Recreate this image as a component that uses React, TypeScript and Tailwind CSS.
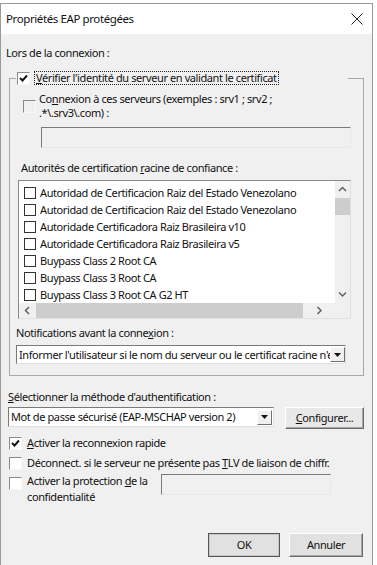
import React from 'react';

// small classic windows checkbox
function Check({ checked = false, flat = false, disabled = false }: { checked?: boolean; flat?: boolean; disabled?: boolean }) {
    const box = flat
        ? "w-[12px] h-[12px] border border-[#333] bg-white"
        : `w-[13px] h-[13px] border border-t-[#8a8a8a] border-l-[#8a8a8a] border-b-[#f8f8f8] border-r-[#f8f8f8] ${disabled ? 'bg-[#f0f0f0]' : 'bg-white'}`;
    return (
        <div className={`${box} shrink-0 flex items-center justify-center`}>
            {checked && (
                <svg width="9" height="9" viewBox="0 0 9 9">
                    <path d="M1 4 L3.5 6.5 L8 1.5" stroke="#111" strokeWidth="1.9" fill="none" />
                </svg>
            )}
        </div>
    );
}

function Chevron({ dir }: { dir: 'up' | 'down' | 'left' | 'right' }) {
    const d = {
        up: "M1 5 L4.5 1.5 L8 5",
        down: "M1 1.5 L4.5 5 L8 1.5",
        left: "M5 1 L1.5 4.5 L5 8",
        right: "M1.5 1 L5 4.5 L1.5 8",
    }[dir];
    const w = dir === 'up' || dir === 'down' ? 9 : 7;
    const h = dir === 'up' || dir === 'down' ? 7 : 9;
    return (
        <svg width={w} height={h} viewBox={`0 0 ${w} ${h}`}>
            <path d={d} stroke="#606060" strokeWidth="1.5" fill="none" />
        </svg>
    );
}

function DropArrow() {
    return (
        <div className="w-[15px] h-[15px] flex items-center justify-center bg-[#f0f0f0] border border-t-white border-l-white border-b-[#707070] border-r-[#707070]">
            <svg width="7" height="4" viewBox="0 0 7 4">
                <path d="M0 0 L7 0 L3.5 4 Z" fill="#111" />
            </svg>
        </div>
    );
}

export default function App() {
    const certs = [
        'Autoridad de Certificacion Raiz del Estado Venezolano',
        'Autoridad de Certificacion Raiz del Estado Venezolano',
        'Autoridade Certificadora Raiz Brasileira v10',
        'Autoridade Certificadora Raiz Brasileira v5',
        'Buypass Class 2 Root CA',
        'Buypass Class 3 Root CA',
        'Buypass Class 3 Root CA G2 HT',
    ];

    return (
        <div className="w-[377px] h-[565px] bg-white overflow-hidden font-['Noto_Sans',sans-serif] text-[11px] tracking-[-0.4px] text-[#111] leading-[14px]">
            <div className="mt-[3px] w-[373px] h-[565px] border border-[#9a9a9a] bg-[#f0f0f0] flex flex-col">
                {/* title bar */}
                <div className="h-[30px] bg-white flex items-center justify-between pl-[5px] pr-[9px]">
                    <span className="text-[11.5px]">Propriétés EAP protégées</span>
                    <svg width="12" height="12" viewBox="0 0 12 12">
                        <path d="M0.5 0.5 L11.5 11.5 M11.5 0.5 L0.5 11.5" stroke="#222" strokeWidth="1" />
                    </svg>
                </div>

                <div className="flex flex-col pl-[7px]">
                    <div className="mt-[12px] ml-[-2px] h-[14px]">Lors de la connexion :</div>

                    <fieldset className="mt-[11px] ml-[1px] w-[355px] border border-[#a8a8a8] pb-[11px]">
                        <legend className="ml-[6px] w-[332px] px-[1px] flex items-center gap-[4px] h-[14px]">
                            <Check checked />
                            <span className="border border-dotted border-[#222] px-[1px] leading-[12px]"><u>V</u>érifier l'identité du serveur en validant le certificat</span>
                        </legend>

                        <div className="mt-[7px] ml-[13px] flex items-start gap-[3px]">
                            <div className="mt-[8px]"><Check disabled /></div>
                            <div className="flex flex-col">
                                <span className="h-[14px]">Co<u>n</u>nexion à ces serveurs (exemples : srv1 ; srv2 ;</span>
                                <span className="h-[13px]">.*\.srv3\.com) :</span>
                            </div>
                        </div>
                        <div className="mt-[8px] ml-[31px] w-[310px] h-[21px] border border-t-[#7a7a7a] border-l-[#7a7a7a] border-b-[#e8e8e8] border-r-[#e8e8e8] bg-[#f0f0f0]" />

                        <div className="mt-[13px] ml-[11px] h-[14px]">Autorités de certification <u>r</u>acine de confiance :</div>

                        <div className="mt-[5px] ml-[8px] w-[333px] h-[139px] border border-t-[#8a8a8a] border-l-[#8a8a8a] border-b-[#e0e0e0] border-r-[#e0e0e0] bg-white grid grid-cols-[1fr_15px] grid-rows-[1fr_15px]">
                            <div className="flex flex-col pt-[3px] overflow-hidden">
                                {certs.map((c, i) => (
                                    <div key={i} className="h-[17px] flex items-center gap-[4px] pl-[5px] whitespace-nowrap">
                                        <Check flat />
                                        <span>{c}</span>
                                    </div>
                                ))}
                            </div>
                            <div className="bg-[#f0f0f0] flex flex-col items-center">
                                <div className="h-[17px] flex items-center justify-center"><Chevron dir="up" /></div>
                                <div className="w-[15px] h-[17px] bg-[#cdcdcd]" />
                                <div className="flex-1" />
                                <div className="h-[17px] flex items-center justify-center"><Chevron dir="down" /></div>
                            </div>
                            <div className="bg-[#f0f0f0] flex items-center">
                                <div className="w-[17px] flex justify-center"><Chevron dir="left" /></div>
                                <div className="w-[267px] h-[15px] bg-[#cdcdcd]" />
                                <div className="flex-1 flex justify-center"><Chevron dir="right" /></div>
                            </div>
                            <div className="bg-[#f0f0f0]" />
                        </div>

                        <div className="mt-[7px] ml-[6px] h-[14px]">Notifications avant la conne<u>x</u>ion :</div>
                        <div className="mt-[5px] ml-[6px] w-[330px] h-[19px] border border-t-[#7a7a7a] border-l-[#7a7a7a] border-b-[#e0e0e0] border-r-[#e0e0e0] bg-white flex items-center">
                            <span className="flex-1 overflow-hidden whitespace-nowrap pl-[2px]">Informer l'utilisateur si le nom du serveur ou le certificat racine n'est pas autorisé</span>
                            <DropArrow />
                        </div>
                    </fieldset>

                    <div className="mt-[14px] h-[14px]"><u>S</u>électionner la méthode d'authentification :</div>
                    <div className="mt-[3px] flex items-start">
                        <div className="w-[266px] h-[20px] border border-t-[#7a7a7a] border-l-[#7a7a7a] border-b-[#e0e0e0] border-r-[#e0e0e0] bg-white flex items-center pr-[1px]">
                            <span className="flex-1 pl-[2px] whitespace-nowrap">Mot de passe sécurisé (EAP-MSCHAP version 2)</span>
                            <DropArrow />
                        </div>
                        <div className="ml-[11px] w-[79px] h-[22px] bg-[#e8e8e8] border border-t-white border-l-white border-b-[#6a6a6a] border-r-[#6a6a6a] shadow-[inset_-1px_-1px_0_#a8a8a8] flex items-center justify-center">
                            <span><u>C</u>onfigurer...</span>
                        </div>
                    </div>

                    <div className="mt-[4px] h-[20px] flex items-center gap-[5px] ml-[1px]">
                        <Check checked />
                        <span><u>A</u>ctiver la reconnexion rapide</span>
                    </div>
                    <div className="h-[20px] flex items-center gap-[5px] ml-[1px]">
                        <Check />
                        <span>Déconnect. si le serveur ne présente pas <u>T</u>LV de liaison de chiffr.</span>
                    </div>
                    <div className="flex items-start ml-[1px]">
                        <div className="flex items-start gap-[5px] w-[152px]">
                            <div className="mt-[4px]"><Check /></div>
                            <div className="flex flex-col pt-[1px]">
                                <span className="h-[16px]">Activer la protection <u>d</u>e la</span>
                                <span className="h-[16px]">confidentialité</span>
                            </div>
                        </div>
                        <div className="mt-[1px] w-[170px] h-[21px] border border-t-[#7a7a7a] border-l-[#7a7a7a] border-b-[#e8e8e8] border-r-[#e8e8e8] bg-[#f0f0f0]" />
                    </div>

                    <div className="mt-[27px] flex justify-end gap-[9px] pr-[9px]">
                        <div className="w-[72px] h-[24px] bg-[#e1e1e1] border border-[#555] shadow-[inset_0_0_0_1px_#c8c8c8] flex items-center justify-center">OK</div>
                        <div className="w-[74px] h-[24px] bg-[#e1e1e1] border border-t-white border-l-white border-b-[#6a6a6a] border-r-[#6a6a6a] shadow-[inset_-1px_-1px_0_#a8a8a8] flex items-center justify-center">Annuler</div>
                    </div>
                </div>
            </div>
        </div>
    );
}
